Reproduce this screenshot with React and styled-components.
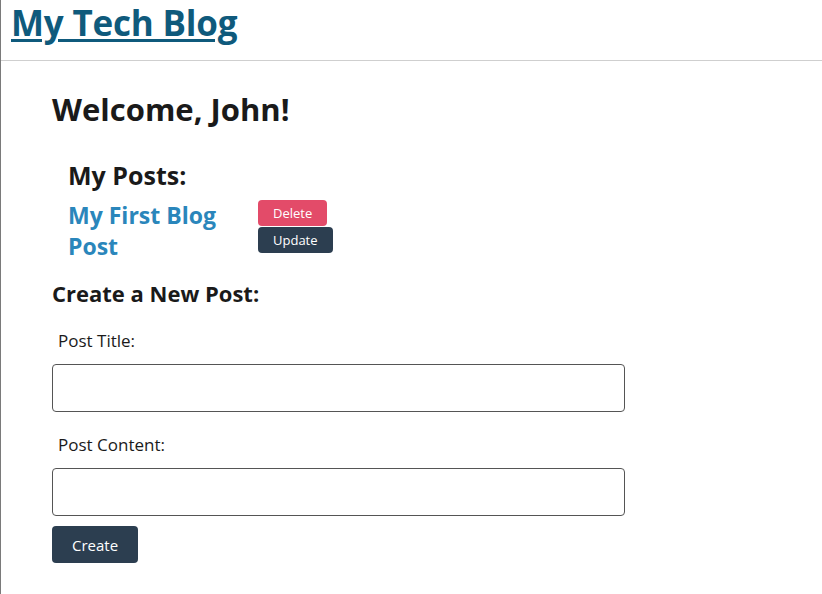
import styled, { createGlobalStyle } from 'styled-components';

const GlobalStyle = createGlobalStyle`
  body {
    margin: 0;
    font-family: "Open Sans", "Noto Sans", sans-serif;
    color: #1a1a1a;
    background: #fff;
  }
`;

const Page = styled.div`
  min-height: 594px;
  border-left: 1px solid #7a7a7a;
  box-sizing: border-box;
`;

const Header = styled.header`
  height: 60px;
  padding: 0 10px;
  border-bottom: 1px solid #cfcfcf;
`;

const SiteTitle = styled.a`
  display: inline-block;
  font-size: 35px;
  font-weight: 700;
  line-height: 46px;
  letter-spacing: -0.2px;
  color: #0f5a7c;
  text-decoration: underline;
  text-decoration-thickness: 3px;
  text-underline-offset: 3px;
`;

const Main = styled.main`
  padding: 29px 0 0 51px;
  width: 573px;
`;

const Welcome = styled.h2`
  margin: 0 0 31px;
  font-size: 31px;
  font-weight: 700;
  line-height: 38px;
`;

const Posts = styled.section`
  padding-left: 16px;
`;

const PostsHeading = styled.h3`
  margin: 0 0 9px;
  font-size: 25px;
  font-weight: 700;
  line-height: 32px;
`;

const PostRow = styled.div`
  display: flex;
  align-items: flex-start;
`;

const PostLink = styled.a`
  width: 175px;
  margin-right: 15px;
  font-size: 23px;
  font-weight: 700;
  line-height: 31px;
  color: #2a86bb;
  text-decoration: none;
`;

const Actions = styled.div`
  display: flex;
  flex-direction: column;
  align-items: flex-start;
  gap: 1px;
`;

const SmallButton = styled.button`
  border: none;
  border-radius: 4px;
  padding: 0 15px;
  height: 26px;
  font-family: inherit;
  font-size: 13px;
  color: #fff;
  background: ${(p) => (p.danger ? '#e34b69' : '#2c3e50')};
  cursor: pointer;
`;

const FormHeading = styled.h3`
  margin: 17px 0 23px;
  font-size: 22px;
  font-weight: 700;
  line-height: 28px;
`;

const Label = styled.label`
  display: block;
  padding-left: 6px;
  font-size: 17px;
  line-height: 22px;
  margin-bottom: 12px;
`;

const Input = styled.input`
  display: block;
  box-sizing: border-box;
  width: 573px;
  height: 48px;
  border: 1px solid #555;
  border-radius: 4px;
  margin-bottom: ${(p) => p.gap || 0}px;
`;

const CreateButton = styled.button`
  border: none;
  border-radius: 4px;
  height: 37px;
  padding: 0 20px;
  font-family: inherit;
  font-size: 15px;
  color: #fff;
  background: #2c3e50;
  cursor: pointer;
`;

export default function App() {
  return (
    <Page>
      <GlobalStyle />
      <Header>
        <SiteTitle href="#">My Tech Blog</SiteTitle>
      </Header>
      <Main>
        <Welcome>Welcome, John!</Welcome>
        <Posts>
          <PostsHeading>My Posts:</PostsHeading>
          <PostRow>
            <PostLink href="#">My First Blog Post</PostLink>
            <Actions>
              <SmallButton danger>Delete</SmallButton>
              <SmallButton>Update</SmallButton>
            </Actions>
          </PostRow>
        </Posts>
        <FormHeading>Create a New Post:</FormHeading>
        <Label>Post Title:</Label>
        <Input gap={22} />
        <Label>Post Content:</Label>
        <Input gap={10} />
        <CreateButton>Create</CreateButton>
      </Main>
    </Page>
  );
}
